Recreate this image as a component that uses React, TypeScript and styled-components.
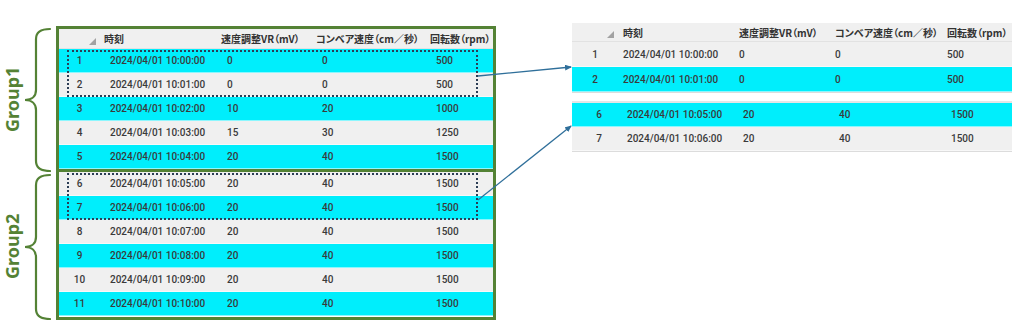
import React from "react";
import styled, { createGlobalStyle } from "styled-components";

const GREEN = "#548235";
const CYAN = "#00eefc";
const ROW_GRAY = "#f0f0f0";
const ARROW = "#2f6f9a";

const GlobalStyle = createGlobalStyle`
  html, body {
    margin: 0;
    padding: 0;
    background: #ffffff;
  }
  body {
    font-family: Roboto, "Noto Sans", "Noto Sans CJK JP", sans-serif;
  }
`;

const Page = styled.div`
  position: relative;
  width: 1024px;
  height: 330px;
  display: flex;
  align-items: flex-start;
  overflow: hidden;
`;

const LeftSection = styled.div`
  display: flex;
  margin-top: 26px;
`;

const LabelColumn = styled.div`
  width: 56px;
  display: flex;
  flex-direction: column;
`;

const GroupBlock = styled.div<{ $h: number }>`
  height: ${(p) => p.$h}px;
  display: flex;
  align-items: stretch;
`;

const GroupText = styled.div`
  width: 24px;
  display: flex;
  align-items: center;
  justify-content: center;
  writing-mode: vertical-rl;
  transform: rotate(180deg);
  font-family: "Noto Sans", sans-serif;
  font-size: 18px;
  font-weight: 700;
  color: ${GREEN};
`;

const Frame = styled.div`
  width: 440px;
  box-sizing: border-box;
  border: 3px solid ${GREEN};
  background: #ffffff;
`;

const Body = styled.div<{ $divider?: boolean }>`
  position: relative;
  border-top: ${(p) => (p.$divider ? `3px solid ${GREEN}` : "none")};
`;

const Block = styled.div<{ $gapTop?: boolean }>`
  border-top: ${(p) => (p.$gapTop ? "2px solid #e6e6e6" : "none")};
  border-bottom: 1px solid #dcdcdc;
  margin-top: ${(p) => (p.$gapTop ? "8px" : "0")};
`;

const Row = styled.div<{ $cols: string; $h: number; $bg: string; $shift?: number }>`
  display: grid;
  grid-template-columns: ${(p) => p.$cols};
  height: ${(p) => p.$h}px;
  box-sizing: border-box;
  padding-left: ${(p) => p.$shift || 0}px;
  background: ${(p) => p.$bg};
  border-bottom: 1px solid rgba(255, 255, 255, 0.55);
  align-items: center;
`;

const HeadRow = styled(Row)`
  border-bottom: 1px solid #e2e2e2;
  align-items: stretch;
`;

const Cell = styled.div<{ $pad: number; $center?: boolean }>`
  padding-left: ${(p) => (p.$center ? 0 : p.$pad)}px;
  text-align: ${(p) => (p.$center ? "center" : "left")};
  font-size: 10px;
  font-weight: 500;
  color: #3a3a3a;
  white-space: nowrap;
`;

const HeadCell = styled.div<{ $pad: number }>`
  padding-left: ${(p) => p.$pad}px;
  display: flex;
  align-items: center;
  font-family: "Noto Sans CJK JP", sans-serif;
  font-feature-settings: "palt";
  font-size: 10px;
  font-weight: 700;
  color: #333333;
  white-space: nowrap;
`;

const Corner = styled.div`
  display: flex;
  justify-content: flex-end;
  align-items: flex-end;
  padding: 0 4px 3px 0;
`;

const SortMark = styled.span`
  width: 0;
  height: 0;
  border-left: 7px solid transparent;
  border-bottom: 7px solid #a2a2a2;
`;

const Selection = styled.div`
  position: absolute;
  top: 1px;
  left: 8px;
  width: 411px;
  height: 47px;
  border: 2px dotted #2b3d55;
  box-sizing: border-box;
`;

const RightSection = styled.div`
  width: 440px;
  margin-left: 76px;
  margin-top: 23px;
`;

const Overlay = styled.svg`
  position: absolute;
  left: 0;
  top: 0;
  pointer-events: none;
`;

type Rec = [number, string, number, number, number];

const data: Rec[] = [
  [1, "2024/04/01 10:00:00", 0, 0, 500],
  [2, "2024/04/01 10:01:00", 0, 0, 500],
  [3, "2024/04/01 10:02:00", 10, 20, 1000],
  [4, "2024/04/01 10:03:00", 15, 30, 1250],
  [5, "2024/04/01 10:04:00", 20, 40, 1500],
  [6, "2024/04/01 10:05:00", 20, 40, 1500],
  [7, "2024/04/01 10:06:00", 20, 40, 1500],
  [8, "2024/04/01 10:07:00", 20, 40, 1500],
  [9, "2024/04/01 10:08:00", 20, 40, 1500],
  [10, "2024/04/01 10:09:00", 20, 40, 1500],
  [11, "2024/04/01 10:10:00", 20, 40, 1500],
];

const headers = ["時刻", "速度調整VR（mV）", "コンベア速度（cm／秒）", "回転数（rpm）"];

const LEFT_COLS = "41px 117px 95px 114px 1fr";
const RIGHT_COLS = "46px 116px 96px 112px 1fr";

const Brace: React.FC<{ h: number }> = ({ h }) => {
  const top = 3;
  const bottom = h - 1;
  const mid = (top + bottom) / 2;
  const d = `M26,${top} C18,${top} 12,${top + 2} 12,${top + 10} L12,${mid - 10} C12,${mid - 4} 8,${mid} 1,${mid} C8,${mid} 12,${mid + 4} 12,${mid + 10} L12,${bottom - 10} C12,${bottom - 2} 18,${bottom} 26,${bottom}`;
  return (
    <svg width="28" height={h} viewBox={`0 0 28 ${h}`}>
      <path d={d} fill="none" stroke={GREEN} strokeWidth="2.2" strokeLinecap="round" />
    </svg>
  );
};

const Header: React.FC<{ cols: string; h: number; pad: number }> = ({ cols, h, pad }) => (
  <HeadRow $cols={cols} $h={h} $bg={ROW_GRAY}>
    <Corner>
      <SortMark />
    </Corner>
    {headers.map((t) => (
      <HeadCell key={t} $pad={pad}>
        {t}
      </HeadCell>
    ))}
  </HeadRow>
);

const DataRow: React.FC<{
  rec: Rec;
  cols: string;
  h: number;
  pad: number;
  cyan: boolean;
  shift?: number;
}> = ({ rec, cols, h, pad, cyan, shift }) => (
  <Row $cols={cols} $h={h} $bg={cyan ? CYAN : ROW_GRAY} $shift={shift}>
    <Cell $pad={0} $center>
      {rec[0]}
    </Cell>
    <Cell $pad={pad}>{rec[1]}</Cell>
    <Cell $pad={pad}>{rec[2]}</Cell>
    <Cell $pad={pad}>{rec[3]}</Cell>
    <Cell $pad={pad}>{rec[4]}</Cell>
  </Row>
);

const App: React.FC = () => {
  const group1 = data.slice(0, 5);
  const group2 = data.slice(5);

  return (
    <Page>
      <GlobalStyle />
      <LeftSection>
        <LabelColumn>
          <GroupBlock $h={146}>
            <GroupText>Group1</GroupText>
            <Brace h={146} />
          </GroupBlock>
          <GroupBlock $h={148}>
            <GroupText>Group2</GroupText>
            <Brace h={148} />
          </GroupBlock>
        </LabelColumn>

        <Frame>
          <Header cols={LEFT_COLS} h={20} pad={4} />
          <Body>
            {group1.map((r) => (
              <DataRow key={r[0]} rec={r} cols={LEFT_COLS} h={24} pad={10} cyan={r[0] % 2 === 1} />
            ))}
            <Selection />
          </Body>
          <Body $divider>
            {group2.map((r) => (
              <DataRow key={r[0]} rec={r} cols={LEFT_COLS} h={24} pad={10} cyan={r[0] % 2 === 1} />
            ))}
            <Selection />
          </Body>
        </Frame>
      </LeftSection>

      <RightSection>
        <Header cols={RIGHT_COLS} h={19} pad={5} />
        <Block>
          <DataRow rec={data[0]} cols={RIGHT_COLS} h={25} pad={5} cyan={false} />
          <DataRow rec={data[1]} cols={RIGHT_COLS} h={25} pad={5} cyan />
        </Block>
        <Block $gapTop>
          <DataRow rec={data[5]} cols={RIGHT_COLS} h={24} pad={5} cyan shift={4} />
          <DataRow rec={data[6]} cols={RIGHT_COLS} h={24} pad={5} cyan={false} shift={4} />
        </Block>
      </RightSection>

      <Overlay width="1024" height="330" viewBox="0 0 1024 330">
        <defs>
          <marker id="head" markerWidth="8" markerHeight="8" refX="6" refY="3" orient="auto" markerUnits="userSpaceOnUse">
            <path d="M0,0 L7,3 L0,6 Z" fill={ARROW} />
          </marker>
        </defs>
        <line x1="478" y1="76" x2="571" y2="67" stroke={ARROW} strokeWidth="1.3" markerEnd="url(#head)" />
        <line x1="478" y1="200" x2="571" y2="126" stroke={ARROW} strokeWidth="1.3" markerEnd="url(#head)" />
      </Overlay>
    </Page>
  );
};

export default App;
